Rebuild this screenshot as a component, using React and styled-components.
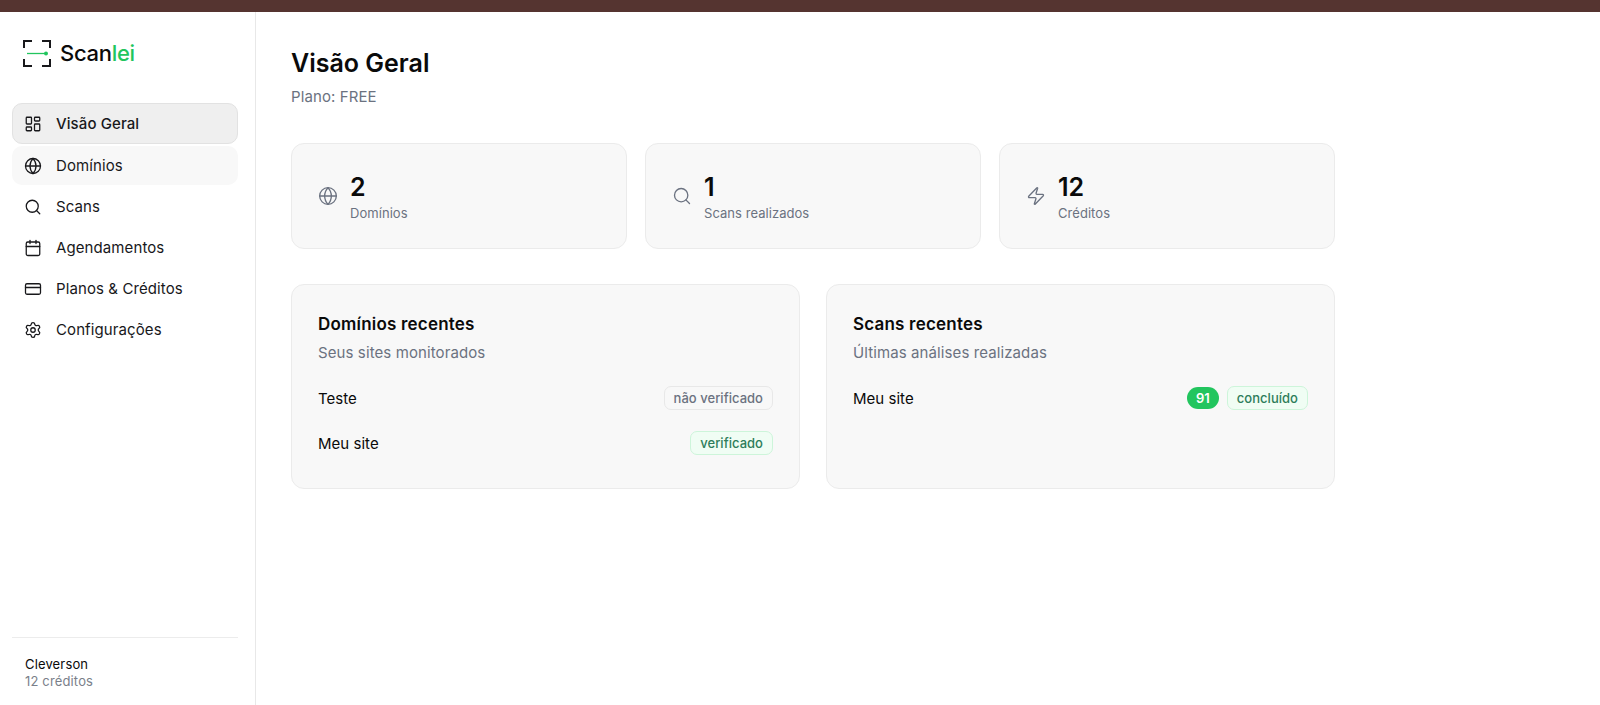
import React from 'react';
import styled, { createGlobalStyle } from 'styled-components';
import { LayoutDashboard, Globe, Search, Calendar, CreditCard, Settings, Zap } from 'lucide-react';

const GlobalStyle = createGlobalStyle`
  html, body {
    margin: 0;
    padding: 0;
    height: 100%;
    background: #fff;
    font-family: Inter, 'Liberation Sans', sans-serif;
    color: #0a0a0a;
    overflow: hidden;
  }
  * { box-sizing: border-box; }
`;

const Page = styled.div`
  height: 705px;
  display: flex;
  flex-direction: column;
`;

const TopBar = styled.div`
  height: 12px;
  flex: none;
  background: #553430;
`;

const Shell = styled.div`
  flex: 1;
  display: flex;
  min-height: 0;
`;

const Sidebar = styled.aside`
  width: 256px;
  flex: none;
  border-right: 1px solid #e8e8e8;
  padding: 0 17px 0 12px;
  display: flex;
  flex-direction: column;
`;

const Brand = styled.div`
  height: 91px;
  padding: 0 0 9px 11px;
  display: flex;
  align-items: center;
  gap: 9px;
  font-size: 22px;
  font-weight: 500;
  letter-spacing: -0.3px;
`;

const Green = styled.span`
  color: #22c55e;
`;

const Nav = styled.nav`
  display: flex;
  flex-direction: column;
  gap: 2px;
`;

const NavItem = styled.a`
  height: ${p => (p.$active ? '41px' : '39.1px')};
  display: flex;
  align-items: center;
  gap: 14px;
  padding: 0 11px;
  border-radius: 10px;
  font-size: 15px;
  letter-spacing: 0.1px;
  font-weight: ${p => (p.$active ? 500 : 400)};
  color: #18181b;
  background: ${p => (p.$active ? '#efefef' : p.$hover ? '#f8f8f8' : 'transparent')};
  border: 1px solid ${p => (p.$active ? '#e2e2e2' : 'transparent')};
`;

const SideFooter = styled.div`
  margin-top: auto;
  border-top: 1px solid #ececec;
  padding: 18px 13px 0;
  height: 68px;
  font-size: 13px;
  line-height: 17px;
  letter-spacing: 0.15px;
`;

const Muted = styled.div`
  color: #7a7f8a;
`;

const Main = styled.main`
  flex: 1;
  padding: 36px 35px 0;
`;

const Content = styled.div`
  width: 1044px;
`;

const Title = styled.h1`
  margin: 0;
  font-size: 25px;
  line-height: 30px;
  font-weight: 600;
`;

const Plan = styled.p`
  margin: 9px 0 0;
  font-size: 15px;
  line-height: 20px;
  letter-spacing: 0.1px;
  color: #6b7280;
`;

const Stats = styled.div`
  margin-top: 36px;
  display: grid;
  grid-template-columns: repeat(3, 1fr);
  gap: 18px;
`;

const Card = styled.section`
  background: #f8f8f8;
  border: 1px solid #ebebeb;
  border-radius: 13px;
`;

const StatCard = styled(Card)`
  height: 106px;
  padding: 0 26px;
  display: flex;
  align-items: center;
  gap: 12px;
  color: #6b7280;
`;

const StatText = styled.div`
  margin-top: 2px;
`;

const StatValue = styled.div`
  font-size: 25px;
  line-height: 32px;
  font-weight: 600;
  color: #0a0a0a;
`;

const StatLabel = styled.div`
  font-size: 13px;
  line-height: 20px;
  letter-spacing: 0.05px;
  color: #6b7280;
`;

const Panels = styled.div`
  margin-top: 35px;
  display: grid;
  grid-template-columns: repeat(2, 1fr);
  gap: 26px;
`;

const Panel = styled(Card)`
  height: 205px;
  padding: 27px 26px 0;
`;

const PanelTitle = styled.h2`
  margin: 0;
  font-size: 17px;
  line-height: 24px;
  font-weight: 600;
  letter-spacing: 0.2px;
`;

const PanelSub = styled.p`
  margin: 7px 0 0;
  font-size: 15px;
  line-height: 20px;
  letter-spacing: 0.1px;
  color: #6b7280;
`;

const Rows = styled.div`
  margin-top: 23px;
  display: flex;
  flex-direction: column;
  gap: 21px;
`;

const Row = styled.div`
  height: 24px;
  display: flex;
  align-items: center;
  justify-content: space-between;
  font-size: 15px;
  letter-spacing: 0.03px;
`;

const Badges = styled.div`
  display: flex;
  align-items: center;
  gap: 8px;
`;

const Badge = styled.span`
  height: 24px;
  padding: 0 9px;
  display: inline-flex;
  align-items: center;
  border-radius: 7px;
  font-size: 13px;
  font-weight: 500;
  color: ${p => (p.$ok ? '#2e7d5b' : '#6b7280')};
  background: ${p => (p.$ok ? '#f0fdf4' : '#f8f8f8')};
  border: 1px solid ${p => (p.$ok ? '#cdf5da' : '#e8e8e8')};
`;

const Score = styled.span`
  height: 22px;
  padding: 0 9px;
  display: inline-flex;
  align-items: center;
  border-radius: 11px;
  font-size: 13px;
  font-weight: 600;
  color: #fff;
  background: #22c55e;
`;

const ScanLogo = () => (
  <svg width="28" height="27" viewBox="0 0 28 27" fill="none" stroke="#18181b" strokeWidth="2">
    <path d="M1 8V1h8M19 1h8v7M1 19v7h8M19 26h8v-7" />
    <path d="M4 13.5h19" stroke="#22c55e" strokeWidth="1.3" />
    <circle cx="23" cy="13.5" r="2" fill="#22c55e" stroke="none" />
  </svg>
);

const navItems = [
  { label: 'Visão Geral', icon: LayoutDashboard, active: true },
  { label: 'Domínios', icon: Globe, hover: true },
  { label: 'Scans', icon: Search },
  { label: 'Agendamentos', icon: Calendar },
  { label: 'Planos & Créditos', icon: CreditCard },
  { label: 'Configurações', icon: Settings },
];

const stats = [
  { value: 2, label: 'Domínios', icon: Globe },
  { value: 1, label: 'Scans realizados', icon: Search },
  { value: 12, label: 'Créditos', icon: Zap },
];

export default function App() {
  return (
    <Page>
      <GlobalStyle />
      <TopBar />
      <Shell>
        <Sidebar>
          <Brand>
            <ScanLogo />
            <span>Scan<Green>lei</Green></span>
          </Brand>
          <Nav>
            {navItems.map(({ label, icon: Icon, active, hover }) => (
              <NavItem key={label} $active={active} $hover={hover}>
                <Icon size={18} strokeWidth={1.7} />
                {label}
              </NavItem>
            ))}
          </Nav>
          <SideFooter>
            <div>Cleverson</div>
            <Muted>12 créditos</Muted>
          </SideFooter>
        </Sidebar>
        <Main>
          <Content>
            <Title>Visão Geral</Title>
            <Plan>Plano: FREE</Plan>
            <Stats>
              {stats.map(({ value, label, icon: Icon }) => (
                <StatCard key={label}>
                  <Icon size={20} strokeWidth={1.6} />
                  <StatText>
                    <StatValue>{value}</StatValue>
                    <StatLabel>{label}</StatLabel>
                  </StatText>
                </StatCard>
              ))}
            </Stats>
            <Panels>
              <Panel>
                <PanelTitle>Domínios recentes</PanelTitle>
                <PanelSub>Seus sites monitorados</PanelSub>
                <Rows>
                  <Row>Teste<Badge>não verificado</Badge></Row>
                  <Row>Meu site<Badge $ok>verificado</Badge></Row>
                </Rows>
              </Panel>
              <Panel>
                <PanelTitle>Scans recentes</PanelTitle>
                <PanelSub>Últimas análises realizadas</PanelSub>
                <Rows>
                  <Row>
                    Meu site
                    <Badges>
                      <Score>91</Score>
                      <Badge $ok>concluído</Badge>
                    </Badges>
                  </Row>
                </Rows>
              </Panel>
            </Panels>
          </Content>
        </Main>
      </Shell>
    </Page>
  );
}
